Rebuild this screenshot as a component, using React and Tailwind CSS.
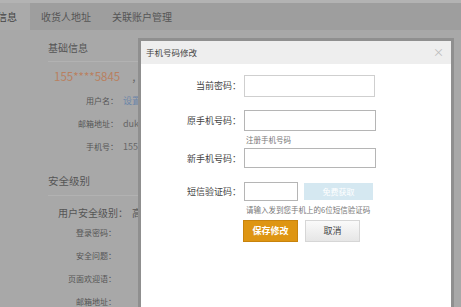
import React from 'react';

const cjk = { fontFamily: '"Noto Sans CJK SC", "Noto Sans", sans-serif' };

function InfoRow({ label, value, valueClass = 'text-[#666]' }) {
  return (
    <div className="flex items-center h-[23px]">
      <span className="w-[118px] text-right text-[8px] text-[#555]">{label}</span>
      <span className={`ml-[5px] text-[9px] ${valueClass}`}>{value}</span>
    </div>
  );
}

function Field({ label, children, hint }) {
  return (
    <div className="flex flex-col">
      <div className="flex items-center">
        <span className="w-[102px] text-right text-[9px] text-[#444] pr-[2px]">{label}</span>
        <div className="ml-[1px] flex items-center gap-[6px]">{children}</div>
      </div>
      {hint && <span className="ml-[105px] mt-[3px] text-[7.5px] text-[#777]">{hint}</span>}
    </div>
  );
}

export default function App() {
  return (
    <div className="relative w-[461px] h-[307px] overflow-hidden bg-[#a8a8a8]" style={cjk}>
      <div className="h-[3px] bg-[#b3b3b3]" />
      <nav className="flex h-[27px] bg-[#9e9e9e] items-center">
        <div className="h-full w-[30px] bg-[#aaaaaa] flex items-center text-[10px] text-[#444] overflow-hidden">
          <span className="-ml-[3px]">信息</span>
        </div>
        <span className="ml-[11px] text-[10px] text-[#555]">收货人地址</span>
        <span className="ml-[21px] text-[10px] text-[#555]">关联账户管理</span>
      </nav>

      <div className="pl-[48px] pt-[10px]">
        <div className="text-[10px] text-[#555] pb-[6px] border-b border-[#b2b2b2] w-[320px]">基础信息</div>
        <div className="pl-[6px] pt-[4px] text-[11.5px] text-[#b98060] leading-[20px]">
          155****5845<span className="ml-[12px] text-[#666]">,</span>
        </div>
      </div>
      <div className="pt-[3px]">
        <InfoRow label="用户名：" value="设置" valueClass="text-[#6c86a8]" />
        <InfoRow label="邮箱地址：" value="duke" />
        <InfoRow label="手机号：" value="155*" />
      </div>
      <div className="pl-[48px] pt-[15px]">
        <div className="text-[10.5px] text-[#555] pb-[6px] border-b border-[#b2b2b2] w-[320px]">安全级别</div>
        <div className="pl-[10px] pt-[9px] text-[10px] text-[#555]">
          用户安全级别：<span className="ml-[4px]">高</span>
        </div>
      </div>
      <div className="pt-[2px]">
        <div className="flex flex-col">
          {['登录密码：', '安全问题：', '页面欢迎语：', '邮箱地址：'].map((t) => (
            <div key={t} className="h-[23px] flex items-center">
              <span className="w-[116px] text-right text-[8px] text-[#555]">{t}</span>
            </div>
          ))}
        </div>
      </div>

      <div className="absolute left-[138px] top-[38px] w-[316px] h-[272px] border-[3px] border-[#8f8f8f] bg-white">
        <div className="flex items-center justify-between h-[23px] bg-[#eeeeee] pl-[5px] pr-[7px]">
          <span className="text-[8.5px] text-[#444]">手机号码修改</span>
          <span className="text-[11px] leading-none text-[#bbb]">×</span>
        </div>
        <div className="flex flex-col pt-[11px]">
          <Field label="当前密码：">
            <div className="w-[131px] h-[22px] border border-[#cfcfcf]" />
          </Field>
          <div className="h-[13px]" />
          <Field label="原手机号码：" hint="注册手机号码">
            <div className="w-[132px] h-[21px] border border-[#b5b5b5]" />
          </Field>
          <div className="h-[3px]" />
          <Field label="新手机号码：">
            <div className="w-[132px] h-[20px] border border-[#b5b5b5]" />
          </Field>
          <div className="h-[14px]" />
          <Field label="短信验证码：" hint="请输入发到您手机上的6位短信验证码">
            <div className="w-[54px] h-[19px] border border-[#b5b5b5]" />
            <div className="w-[69px] h-[17px] bg-[#d5e8f1] flex items-center justify-center text-[8px] text-white">免费获取</div>
          </Field>
          <div className="flex gap-[7px] ml-[102px] mt-[4px]">
            <button className="w-[55px] h-[22px] bg-[#de9512] border border-[#c8830c] text-[9px] font-bold text-white">保存修改</button>
            <button className="w-[55px] h-[22px] bg-gradient-to-b from-[#fafafa] to-[#e6e6e6] border border-[#d6d6d6] text-[9px] text-[#444]">取消</button>
          </div>
        </div>
      </div>
    </div>
  );
}
